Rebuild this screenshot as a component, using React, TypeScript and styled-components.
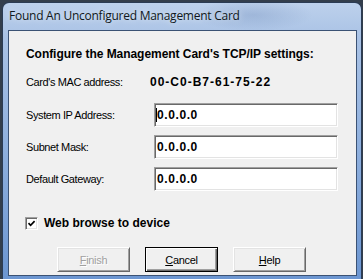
import React from "react";
import styled, { createGlobalStyle } from "styled-components";

const GlobalStyle = createGlobalStyle`
  html, body { margin: 0; padding: 0; }
  body {
    background: #333e4c;
    width: 363px;
    height: 279px;
    overflow: hidden;
    font-family: "Liberation Sans", Arial, sans-serif;
  }
`;

const Screen = styled.div`
  padding: 2px 1px 0 2px;
  height: 279px;
  box-sizing: border-box;
  overflow: hidden;
`;

const Window = styled.div`
  width: 360px;
  height: 290px;
  box-sizing: border-box;
  border: 1px solid #2b3c55;
  border-bottom: none;
  border-radius: 7px 7px 0 0;
  background:
    radial-gradient(ellipse 60px 16px at 250px 12px, rgba(90, 120, 170, 0.25), transparent),
    linear-gradient(180deg, #bdd1ec 0%, #a9c2e5 12%, #8fb0de 50%, #6893d0 100%);
  display: flex;
  flex-direction: column;
  overflow: hidden;
`;

const TitleBar = styled.div`
  height: 27px;
  box-sizing: border-box;
  padding: 5px 6px 0 6px;
  font-family: "Open Sans", "Noto Sans", sans-serif;
  font-size: 12px;
  letter-spacing: -0.25px;
  line-height: 16px;
  color: #101820;
  text-shadow: 0 0 6px rgba(255, 255, 255, 0.7);
  white-space: nowrap;
`;

const Frame = styled.div`
  padding: 0 4px 0 5px;
`;

const Client = styled.div`
  height: 246px;
  box-sizing: border-box;
  border: 1px solid #3b5274;
  background: #f0f0f0;
  padding: 16px 18px 0 17px;
  display: flex;
  flex-direction: column;
  color: #000;
`;

const Heading = styled.div`
  font-size: 12px;
  font-weight: bold;
  line-height: 14px;
  height: 14px;
  letter-spacing: -0.05px;
  white-space: nowrap;
`;

const MacRow = styled.div`
  margin-top: 14px;
  display: flex;
  align-items: center;
  height: 14px;
`;

const Label = styled.div<{ $width?: number }>`
  font-size: 11px;
  letter-spacing: -0.4px;
  line-height: 14px;
  white-space: nowrap;
  width: ${(p) => (p.$width ? `${p.$width}px` : "auto")};
  flex: none;
`;

const MacValue = styled.div`
  font-size: 12px;
  font-weight: bold;
  letter-spacing: 1px;
  line-height: 14px;
  white-space: nowrap;
`;

const FieldGrid = styled.div`
  margin-top: 14px;
  display: grid;
  grid-template-columns: 128px 184px;
  grid-auto-rows: 24px;
  row-gap: 8px;
  align-items: center;
`;

const Field = styled.div<{ $focused?: boolean }>`
  height: 24px;
  box-sizing: border-box;
  background: #fff;
  border-top: 1px solid #a0a0a0;
  border-left: 1px solid #a0a0a0;
  border-bottom: 1px solid #ffffff;
  border-right: 1px solid #ffffff;
  box-shadow: inset 1px 1px 0 #696969, inset -1px -1px 0 #e3e3e3;
  padding-left: ${(p) => (p.$focused ? "1px" : "2px")};
  display: flex;
  align-items: center;
  font-size: 12px;
  font-weight: bold;
  letter-spacing: 0.6px;
  white-space: nowrap;
`;

const Caret = styled.span`
  display: inline-block;
  width: 1px;
  height: 14px;
  background: #000;
  flex: none;
`;

const CheckRow = styled.div`
  margin-top: 25px;
  display: flex;
  align-items: center;
  height: 14px;
  gap: 6px;
  margin-left: -1px;
`;

const CheckBox = styled.span`
  width: 13px;
  height: 13px;
  box-sizing: border-box;
  background: #fff;
  border-top: 1px solid #a0a0a0;
  border-left: 1px solid #a0a0a0;
  border-bottom: 1px solid #ffffff;
  border-right: 1px solid #ffffff;
  box-shadow: inset 1px 1px 0 #696969, inset -1px -1px 0 #e3e3e3;
  display: flex;
  align-items: center;
  justify-content: center;
  flex: none;
`;

const CheckText = styled.span`
  font-size: 12px;
  font-weight: bold;
  line-height: 14px;
  white-space: nowrap;
`;

const ButtonRow = styled.div`
  margin-top: 17px;
  padding-left: 31px;
  display: flex;
  gap: 15px;
`;

const Button = styled.div<{ $default?: boolean; $disabled?: boolean }>`
  width: 73px;
  height: 25px;
  box-sizing: border-box;
  background: #f0f0f0;
  border-style: solid;
  border-width: 1px;
  border-color: ${(p) =>
    p.$default ? "#000 #000 #000 #000" : "#ffffff #696969 #696969 #ffffff"};
  box-shadow: ${(p) =>
    p.$default
      ? "inset 1px 1px 0 #ffffff, inset -1px -1px 0 #696969, inset -2px -2px 0 #a0a0a0"
      : "inset 1px 1px 0 #e3e3e3, inset -1px -1px 0 #a0a0a0"};
  display: flex;
  align-items: center;
  justify-content: center;
  font-size: 11px;
  letter-spacing: -0.3px;
  color: ${(p) => (p.$disabled ? "#a0a0a0" : "#000")};
  text-shadow: ${(p) => (p.$disabled ? "1px 1px 0 #ffffff" : "none")};
`;

const Mnemonic = styled.span`
  text-decoration: underline;
  text-underline-offset: 1px;
`;

export default function App() {
  return (
    <>
      <GlobalStyle />
      <Screen>
        <Window>
          <TitleBar>Found An Unconfigured Management Card</TitleBar>
          <Frame>
            <Client>
              <Heading>Configure the Management Card's TCP/IP settings:</Heading>
              <MacRow>
                <Label $width={124}>Card's MAC address:</Label>
                <MacValue>00-C0-B7-61-75-22</MacValue>
              </MacRow>
              <FieldGrid>
                <Label>System IP Address:</Label>
                <Field $focused>
                  <Caret />
                  0.0.0.0
                </Field>
                <Label>Subnet Mask:</Label>
                <Field>0.0.0.0</Field>
                <Label>Default Gateway:</Label>
                <Field>0.0.0.0</Field>
              </FieldGrid>
              <CheckRow>
                <CheckBox>
                  <svg width="9" height="9" viewBox="0 0 9 9">
                    <path d="M1.5 4.2 L3.6 6.3 L7.6 2.2" fill="none" stroke="#000" strokeWidth="1.7" />
                  </svg>
                </CheckBox>
                <CheckText>Web browse to device</CheckText>
              </CheckRow>
              <ButtonRow>
                <Button $disabled>
                  <span>
                    <Mnemonic>F</Mnemonic>inish
                  </span>
                </Button>
                <Button $default>
                  <span>
                    <Mnemonic>C</Mnemonic>ancel
                  </span>
                </Button>
                <Button>
                  <span>
                    <Mnemonic>H</Mnemonic>elp
                  </span>
                </Button>
              </ButtonRow>
            </Client>
          </Frame>
        </Window>
      </Screen>
    </>
  );
}
